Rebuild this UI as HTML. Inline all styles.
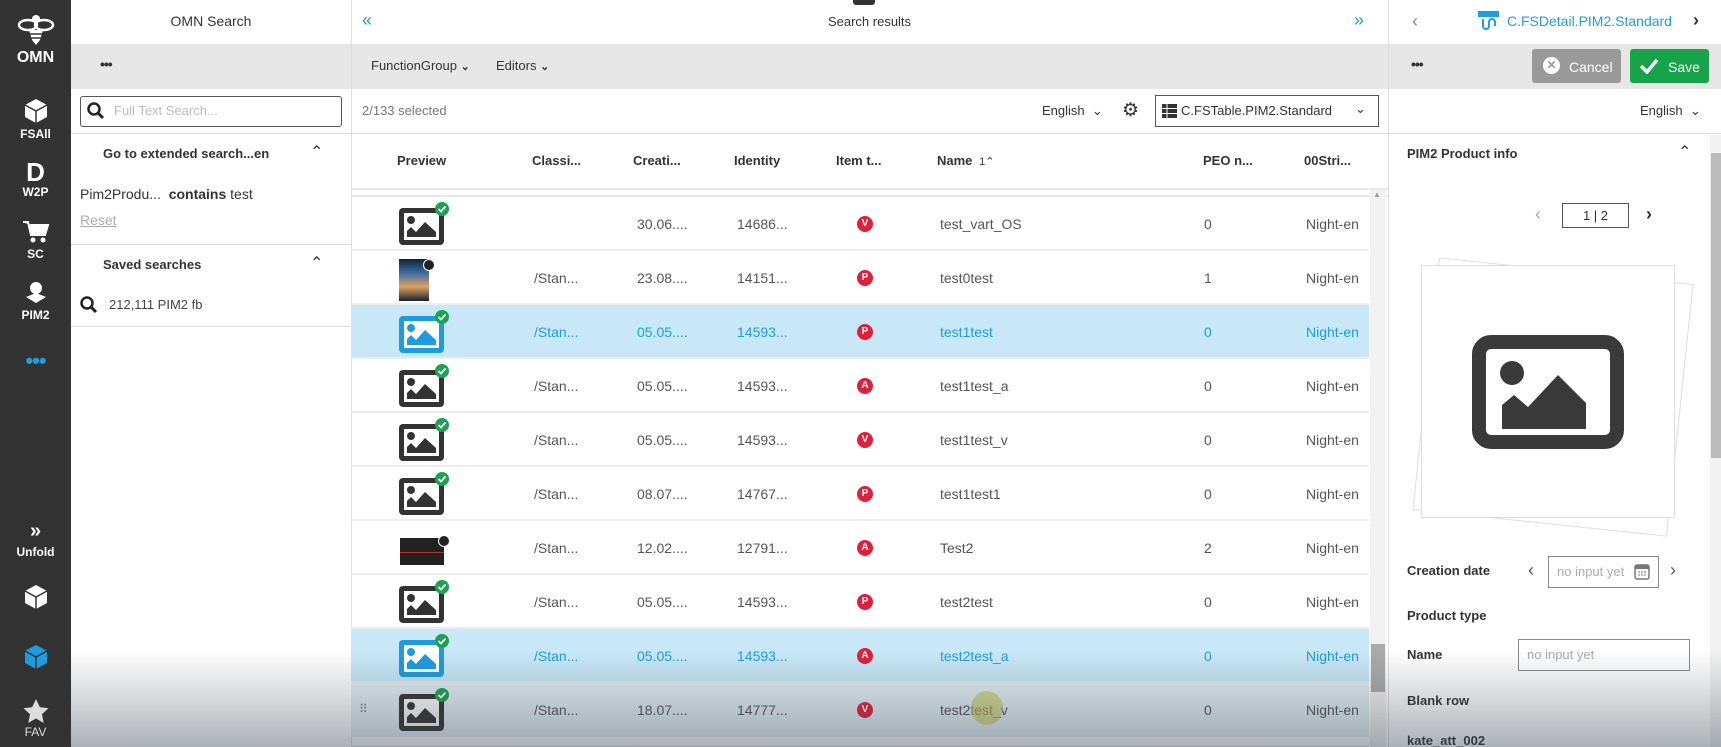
<!DOCTYPE html>
<html><head><meta charset="utf-8"><style>
*{box-sizing:border-box;margin:0;padding:0}
html,body{width:1721px;height:747px;overflow:hidden}
body{font-family:"Liberation Sans",Arial,sans-serif;background:#fff;position:relative;color:#333}
.abs{position:absolute}
.side{left:0;top:0;width:71px;height:747px;background:#333;color:#fff;text-align:center;font-size:12px;font-weight:bold}
.side .it{position:absolute;left:0;width:71px}
.gray{background:#e6e6e6}
.t{position:absolute;white-space:nowrap}
.row{position:absolute;left:351px;width:1018px;height:54px;border-bottom:2px solid #ececec;font-size:14px;color:#555}
.row.sel{background:#c8e8f8;color:#1e9ce0}
.row .t{top:19px}
.badge{position:absolute;top:19px;width:16px;height:16px;border-radius:50%;background:#e21f3b;color:#fff;font-size:10px;font-weight:bold;text-align:center;line-height:16px}
.ico{position:absolute;left:47px;top:5px}
.hd{font-size:13px;font-weight:bold;color:#333}
.lab{font-size:13px;font-weight:bold;color:#333;position:absolute;left:1407px}
</style></head><body>

<!-- sidebar -->
<div class="abs side">
 <div class="it" style="top:12px">
  <svg width="40" height="36" viewBox="0 0 40 36"><ellipse cx="12" cy="13" rx="9" ry="5" fill="none" stroke="#fff" stroke-width="2.5"/><ellipse cx="28" cy="13" rx="9" ry="5" fill="none" stroke="#fff" stroke-width="2.5"/><circle cx="20" cy="7" r="4" fill="#fff"/><path d="M13 18h14l-3 10-4 5-4-5z" fill="#fff"/><path d="M14 22h12M15 26h10" stroke="#333" stroke-width="1.5"/></svg>
  <div style="font-size:16px;margin-top:-2px">OMN</div></div>
 <div class="it" style="top:98px"><svg width="26" height="26" viewBox="0 0 26 26"><path d="M13 1 24 7v12l-11 6-11-6V7z" fill="#fff"/><path d="M2 7l11 6 11-6M13 13v12" stroke="#333" stroke-width="1.5" fill="none"/></svg><div>FSAll</div></div>
 <div class="it" style="top:159px"><div style="font-size:26px;line-height:26px;font-weight:900">D</div><div>W2P</div></div>
 <div class="it" style="top:220px"><svg width="28" height="24" viewBox="0 0 28 24"><path d="M1 2h5l3 13h14l3-10H8" fill="#fff" stroke="#fff" stroke-width="2"/><circle cx="11" cy="20" r="2.5" fill="#fff"/><circle cx="21" cy="20" r="2.5" fill="#fff"/></svg><div>SC</div></div>
 <div class="it" style="top:281px"><svg width="24" height="24" viewBox="0 0 24 24"><circle cx="12" cy="7" r="6" fill="#fff"/><path d="M2 16l10-4 10 4-10 6z" fill="#fff"/></svg><div>PIM2</div></div>
 <div class="it" style="top:348px;color:#1e9ce0;font-size:22px;letter-spacing:-1px">•••</div>
 <div class="it" style="top:520px;font-size:20px">»</div>
 <div class="it" style="top:545px">Unfold</div>
 <div class="it" style="top:584px"><svg width="26" height="26" viewBox="0 0 26 26"><path d="M13 1 24 7v12l-11 6-11-6V7z" fill="#fff"/><path d="M2 7l11 6 11-6M13 13v12" stroke="#333" stroke-width="1.5" fill="none"/></svg></div>
 <div class="it" style="top:644px"><svg width="26" height="26" viewBox="0 0 26 26"><path d="M13 1 24 7v12l-11 6-11-6V7z" fill="#1e9ce0"/><path d="M2 7l11 6 11-6M13 13v12" stroke="#333" stroke-width="1.5" fill="none"/></svg></div>
 <div class="it" style="top:699px"><svg width="26" height="25" viewBox="0 0 24 23"><path d="M12 0l3.5 7.5 8 1-6 5.5 1.6 8L12 18l-7.1 4 1.6-8-6-5.5 8-1z" fill="#ddd"/></svg><div style="font-weight:normal;color:#ddd;margin-top:-2px">FAV</div></div>
</div>

<!-- left panel -->
<div class="t" style="left:71px;width:280px;top:13px;text-align:center;font-size:14px">OMN Search</div>
<div class="abs gray" style="left:71px;top:44px;width:280px;height:45px"></div>
<div class="t" style="left:100px;top:56px;font-size:14px;font-weight:bold;letter-spacing:-1px">•••</div>
<div class="abs" style="left:80px;top:96px;width:262px;height:31px;border:1px solid #555;border-radius:3px"></div>
<svg class="abs" style="left:87px;top:102px" width="18" height="18" viewBox="0 0 18 18"><circle cx="7" cy="7" r="5.5" fill="none" stroke="#222" stroke-width="2.5"/><path d="M11 11l5 5" stroke="#222" stroke-width="3"/></svg>
<div class="t" style="left:114px;top:103px;font-size:13px;color:#bbb">Full Text Search...</div>
<div class="abs" style="left:71px;top:133px;width:280px;height:1px;background:#ddd"></div>
<div class="t hd" style="left:103px;top:146px">Go to extended search...en</div>
<div class="t" style="left:310px;top:142px;font-size:16px">&#8963;</div>
<div class="t" style="left:80px;top:186px;font-size:14px">Pim2Produ... &nbsp;<b>contains</b> test</div>
<div class="t" style="left:80px;top:212px;font-size:14px;color:#aaa;text-decoration:underline">Reset</div>
<div class="abs" style="left:71px;top:244px;width:280px;height:1px;background:#ddd"></div>
<div class="t hd" style="left:103px;top:257px">Saved searches</div>
<div class="t" style="left:310px;top:253px;font-size:16px">&#8963;</div>
<svg class="abs" style="left:80px;top:296px" width="18" height="18" viewBox="0 0 18 18"><circle cx="7" cy="7" r="5.5" fill="none" stroke="#222" stroke-width="2.5"/><path d="M11 11l5 5" stroke="#222" stroke-width="3"/></svg>
<div class="t" style="left:109px;top:297px;font-size:13px;color:#444">212,111 PIM2 fb</div>
<div class="abs" style="left:71px;top:326px;width:280px;height:1px;background:#ddd"></div>
<div class="abs" style="left:351px;top:0;width:1px;height:747px;background:#ddd"></div>

<!-- middle -->
<div class="t" style="left:362px;top:10px;color:#1e9ce0;font-size:18px">«</div>
<div class="t" style="left:351px;width:1037px;top:14px;text-align:center;font-size:13px">Search results</div>
<div class="t" style="left:1354px;top:10px;color:#1e9ce0;font-size:18px">»</div>
<div class="abs" style="left:853px;top:0;width:22px;height:5px;background:#333;border-radius:0 0 3px 3px"></div>
<div class="abs gray" style="left:352px;top:44px;width:1369px;height:45px"></div>
<div class="t" style="left:371px;top:58px;font-size:13px">FunctionGroup <b style="font-size:11px">&#8964;</b></div>
<div class="t" style="left:496px;top:58px;font-size:13px">Editors <b style="font-size:11px">&#8964;</b></div>
<div class="t" style="left:362px;top:103px;font-size:13px;color:#777">2/133 selected</div>
<div class="t" style="left:1042px;top:103px;font-size:13px">English &nbsp;&#8964;</div>
<div class="t" style="left:1122px;top:99px;font-size:19px">&#9881;</div>
<div class="abs" style="left:1155px;top:95px;width:224px;height:32px;border:1px solid #555"></div>
<svg class="abs" style="left:1162px;top:104px" width="15" height="14"><rect width="15" height="4" fill="#333"/><rect y="5" width="15" height="4" fill="#333"/><rect y="10" width="15" height="4" fill="#333"/><path d="M5 0v14" stroke="#fff"/></svg>
<div class="t" style="left:1181px;top:103px;font-size:13px">C.FSTable.PIM2.Standard</div>
<div class="t" style="left:1355px;top:101px;font-size:13px">&#8964;</div>
<div class="abs" style="left:352px;top:133px;width:1036px;height:1px;background:#ddd"></div>
<div class="t hd" style="left:397px;top:153px">Preview</div>
<div class="t hd" style="left:532px;top:153px">Classi...</div>
<div class="t hd" style="left:633px;top:153px">Creati...</div>
<div class="t hd" style="left:734px;top:153px">Identity</div>
<div class="t hd" style="left:836px;top:153px">Item t...</div>
<div class="t hd" style="left:937px;top:153px">Name <span style="font-weight:normal;font-size:11px">&nbsp;1&#8963;</span></div>
<div class="t hd" style="left:1203px;top:153px">PEO n...</div>
<div class="t hd" style="left:1304px;top:153px">00Stri...</div>
<div class="abs" style="left:352px;top:188px;width:1036px;height:2px;background:#e8e8e8"></div>
<div class="abs" style="left:352px;top:195px;width:1036px;height:2px;background:#e8e8e8"></div>

<svg width="0" height="0" style="position:absolute"><defs>
<g id="im"><rect x="1" y="6" width="45" height="37" rx="4" fill="currentColor"/><rect x="6" y="11" width="35" height="27" fill="#fff"/><circle cx="13" cy="18" r="4" fill="currentColor"/><path d="M9 35v-6l4-4 5 5 9-10 11 10v5z" fill="currentColor"/></g>
<g id="ck"><circle cx="44" cy="7" r="7" fill="#1aa350"/><path d="M40.5 7l2.5 2.5 4.5-5" stroke="#fff" stroke-width="1.8" fill="none"/></g>
</defs></svg>

<!-- rows -->
<div class="row" style="top:197px"><svg class="ico" width="52" height="46" style="color:#333"><use href="#im"/><use href="#ck"/></svg><div class="t" style="left:286px">30.06....</div><div class="t" style="left:386px">14686...</div><div class="badge" style="left:506px">V</div><div class="t" style="left:589px">test_vart_OS</div><div class="t" style="left:853px">0</div><div class="t" style="left:955px">Night-en</div></div>
<div class="row" style="top:251px"><div class="abs" style="left:48px;top:8px;width:30px;height:42px;background:linear-gradient(#123,#3a6ea5,#e0a060,#123)"></div><div class="abs" style="left:72px;top:8px;width:12px;height:12px;border-radius:50%;background:#222;border:1px solid #fff"></div><div class="t" style="left:183px">/Stan...</div><div class="t" style="left:286px">23.08....</div><div class="t" style="left:386px">14151...</div><div class="badge" style="left:506px">P</div><div class="t" style="left:589px">test0test</div><div class="t" style="left:853px">1</div><div class="t" style="left:955px">Night-en</div></div>
<div class="row sel" style="top:305px"><svg class="ico" width="52" height="46" style="color:#1e9ce0"><use href="#im"/><use href="#ck"/></svg><div class="t" style="left:183px">/Stan...</div><div class="t" style="left:286px">05.05....</div><div class="t" style="left:386px">14593...</div><div class="badge" style="left:506px">P</div><div class="t" style="left:589px">test1test</div><div class="t" style="left:853px">0</div><div class="t" style="left:955px">Night-en</div></div>
<div class="row" style="top:359px"><svg class="ico" width="52" height="46" style="color:#333"><use href="#im"/><use href="#ck"/></svg><div class="t" style="left:183px">/Stan...</div><div class="t" style="left:286px">05.05....</div><div class="t" style="left:386px">14593...</div><div class="badge" style="left:506px">A</div><div class="t" style="left:589px">test1test_a</div><div class="t" style="left:853px">0</div><div class="t" style="left:955px">Night-en</div></div>
<div class="row" style="top:413px"><svg class="ico" width="52" height="46" style="color:#333"><use href="#im"/><use href="#ck"/></svg><div class="t" style="left:183px">/Stan...</div><div class="t" style="left:286px">05.05....</div><div class="t" style="left:386px">14593...</div><div class="badge" style="left:506px">V</div><div class="t" style="left:589px">test1test_v</div><div class="t" style="left:853px">0</div><div class="t" style="left:955px">Night-en</div></div>
<div class="row" style="top:467px"><svg class="ico" width="52" height="46" style="color:#333"><use href="#im"/><use href="#ck"/></svg><div class="t" style="left:183px">/Stan...</div><div class="t" style="left:286px">08.07....</div><div class="t" style="left:386px">14767...</div><div class="badge" style="left:506px">P</div><div class="t" style="left:589px">test1test1</div><div class="t" style="left:853px">0</div><div class="t" style="left:955px">Night-en</div></div>
<div class="row" style="top:521px"><div class="abs" style="left:49px;top:17px;width:44px;height:27px;background:#222"></div><div class="abs" style="left:49px;top:31px;width:44px;height:1px;background:#a33"></div><div class="abs" style="left:87px;top:14px;width:12px;height:12px;border-radius:50%;background:#222;border:1px solid #fff"></div><div class="t" style="left:183px">/Stan...</div><div class="t" style="left:286px">12.02....</div><div class="t" style="left:386px">12791...</div><div class="badge" style="left:506px">A</div><div class="t" style="left:589px">Test2</div><div class="t" style="left:853px">2</div><div class="t" style="left:955px">Night-en</div></div>
<div class="row" style="top:575px"><svg class="ico" width="52" height="46" style="color:#333"><use href="#im"/><use href="#ck"/></svg><div class="t" style="left:183px">/Stan...</div><div class="t" style="left:286px">05.05....</div><div class="t" style="left:386px">14593...</div><div class="badge" style="left:506px">P</div><div class="t" style="left:589px">test2test</div><div class="t" style="left:853px">0</div><div class="t" style="left:955px">Night-en</div></div>
<div class="row sel" style="top:629px"><svg class="ico" width="52" height="46" style="color:#1e9ce0"><use href="#im"/><use href="#ck"/></svg><div class="t" style="left:183px">/Stan...</div><div class="t" style="left:286px">05.05....</div><div class="t" style="left:386px">14593...</div><div class="badge" style="left:506px">A</div><div class="t" style="left:589px">test2test_a</div><div class="t" style="left:853px">0</div><div class="t" style="left:955px">Night-en</div></div>
<div class="row" style="top:683px;background:#e4f0f6"><div class="t" style="left:8px;color:#888;font-size:12px">⠿</div><svg class="ico" width="52" height="46" style="color:#333"><use href="#im"/><use href="#ck"/></svg><div class="t" style="left:183px">/Stan...</div><div class="t" style="left:286px">18.07....</div><div class="t" style="left:386px">14777...</div><div class="badge" style="left:506px">V</div><div class="t" style="left:589px">test2test_v</div><div class="t" style="left:853px">0</div><div class="t" style="left:955px">Night-en</div><div class="abs" style="left:620px;top:8px;width:32px;height:34px;border-radius:50%;background:rgba(200,200,80,.6)"></div></div>
<div class="row" style="top:737px;height:10px"></div>
<!-- scrollbar -->
<div class="abs" style="left:1370px;top:190px;width:16px;height:557px;background:#f1f1f1"></div>
<div class="t" style="left:1373px;top:190px;font-size:8px;color:#999">▲</div>
<div class="abs" style="left:1371px;top:644px;width:14px;height:48px;background:#aaa"></div>
<div class="abs" style="left:1388px;top:0;width:1px;height:747px;background:#ddd"></div>

<!-- right panel -->
<div class="t" style="left:1412px;top:11px;font-size:18px;color:#888">‹</div>
<svg class="abs" style="left:1478px;top:11px" width="21" height="20" viewBox="0 0 21 20"><rect x="0" y="0" width="21" height="6" fill="#1e9ce0"/><path d="M5 8v7a3 3 0 0 0 6 0v-4a3 3 0 0 1 6 0v4" stroke="#1e9ce0" stroke-width="2" fill="none"/></svg>
<div class="t" style="left:1507px;top:13px;font-size:14px;color:#1e9ce0">C.FSDetail.PIM2.Standard</div>
<div class="t" style="left:1693px;top:10px;font-size:18px;font-weight:bold">›</div>
<div class="t" style="left:1411px;top:56px;font-size:14px;font-weight:bold;letter-spacing:-1px">•••</div>
<div class="abs" style="left:1532px;top:49px;width:89px;height:34px;background:#999;border-radius:3px"></div>
<div class="abs" style="left:1543px;top:57px;width:17px;height:17px;border-radius:50%;background:#fff;color:#999;font-size:12px;text-align:center;line-height:17px;font-weight:bold">✕</div>
<div class="t" style="left:1569px;top:59px;font-size:14px;color:#fff">Cancel</div>
<div class="abs" style="left:1630px;top:49px;width:79px;height:34px;background:#16a34a;border-radius:3px"></div>
<svg class="abs" style="left:1639px;top:57px" width="20" height="17"><path d="M2 9l6 6L18 3" stroke="#fff" stroke-width="3.5" fill="none"/></svg>
<div class="t" style="left:1668px;top:59px;font-size:14px;color:#fff">Save</div>
<div class="t" style="left:1640px;top:103px;font-size:13px">English &nbsp;&#8964;</div>
<div class="abs" style="left:1389px;top:133px;width:332px;height:1px;background:#ddd"></div>
<div class="abs" style="left:1710px;top:135px;width:11px;height:612px;background:#f1f1f1"></div>
<div class="abs" style="left:1711px;top:153px;width:10px;height:305px;background:#bbb"></div>
<div class="t lab" style="top:146px">PIM2 Product info</div>
<div class="t" style="left:1678px;top:142px;font-size:16px">&#8963;</div>
<div class="t" style="left:1535px;top:204px;font-size:18px;color:#aaa">‹</div>
<div class="abs" style="left:1562px;top:203px;width:67px;height:25px;border:1px solid #555;font-size:13px;text-align:center;line-height:23px">1 | 2</div>
<div class="t" style="left:1646px;top:204px;font-size:18px;font-weight:bold">›</div>
<div class="abs" style="left:1425px;top:270px;width:256px;height:254px;border:1px solid #ddd;background:#fff;transform:rotate(6deg)"></div>
<div class="abs" style="left:1421px;top:265px;width:254px;height:253px;border:1px solid #ddd;background:#fff"></div>
<svg class="abs" style="left:1472px;top:335px" width="152" height="114" viewBox="0 0 152 114"><rect x="7" y="7" width="138" height="100" rx="12" fill="none" stroke="#3a3a3a" stroke-width="14"/><circle cx="40" cy="38" r="12" fill="#3a3a3a"/><path d="M30 94V70l12-10 14 12 30-32 28 28v26z" fill="#3a3a3a"/></svg>
<div class="t lab" style="top:563px">Creation date</div>
<div class="t" style="left:1528px;top:560px;font-size:18px;color:#555">‹</div>
<div class="abs" style="left:1548px;top:556px;width:111px;height:32px;border:1px solid #888"></div>
<div class="t" style="left:1557px;top:564px;font-size:13px;color:#aaa">no input yet</div>
<svg class="abs" style="left:1634px;top:562px" width="16" height="18"><rect x="1" y="3" width="14" height="14" rx="2" fill="none" stroke="#777" stroke-width="1.5"/><rect x="1" y="3" width="14" height="4" fill="#777"/><path d="M4 10h2M7 10h2M10 10h2M4 13h2M7 13h2M10 13h2" stroke="#777"/></svg>
<div class="t" style="left:1670px;top:560px;font-size:18px;color:#555">›</div>
<div class="t lab" style="top:608px">Product type</div>
<div class="t lab" style="top:647px">Name</div>
<div class="abs" style="left:1518px;top:639px;width:172px;height:32px;border:1px solid #888"></div>
<div class="t" style="left:1527px;top:647px;font-size:13px;color:#aaa">no input yet</div>
<div class="t lab" style="top:693px">Blank row</div>
<div class="t lab" style="top:733px">kate_att_002</div>

<!-- bottom fade overlay -->
<div class="abs" style="left:71px;top:650px;width:1650px;height:97px;background:linear-gradient(rgba(60,70,80,0),rgba(60,70,80,.42))"></div>
</body></html>
